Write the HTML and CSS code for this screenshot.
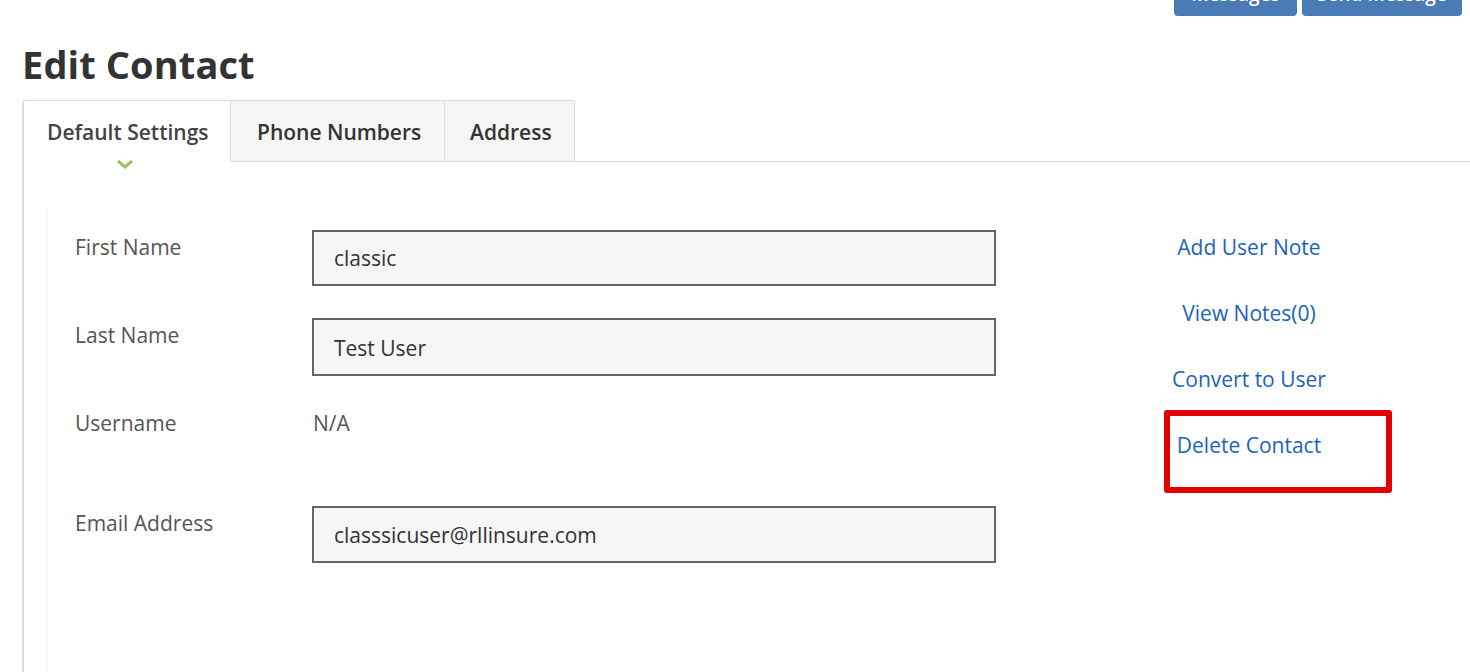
FILE: index.html
```html
<!DOCTYPE html>
<html>
<head>
<meta charset="utf-8">
<link rel="stylesheet" href="styles.css">
</head>
<body>
<div class="topbar">
  <button class="btn btn-msg">Messages</button>
  <button class="btn btn-send">Send Message</button>
</div>
<h1 class="title">Edit Contact</h1>
<div class="tabs">
  <div class="tab active">Default Settings<span class="chev"><svg width="18" height="10" viewBox="0 0 18 10"><path d="M2 2 L9 8 L16 2" fill="none" stroke="#9cc264" stroke-width="3"/></svg></span></div>
  <div class="tab">Phone Numbers</div>
  <div class="tab">Address</div>
  <div class="tabfill"></div>
</div>
<div class="panel">
  <div class="inner">
    <div class="form">
      <div class="row"><div class="label">First Name</div><div class="field">classic</div></div>
      <div class="row"><div class="label">Last Name</div><div class="field">Test User</div></div>
      <div class="row plain"><div class="label">Username</div><div class="value">N/A</div></div>
      <div class="row"><div class="label">Email Address</div><div class="field">classsicuser@rllinsure.com</div></div>
    </div>
    <div class="links">
      <a class="link">Add User Note</a>
      <a class="link">View Notes(0)</a>
      <a class="link">Convert to User</a>
      <a class="link highlight">Delete Contact</a>
    </div>
  </div>
</div>
</body>
</html>
```

FILE: styles.css
```css
html, body {
  margin: 0;
  padding: 0;
  background: #fff;
  font-family: "Open Sans", "Liberation Sans", sans-serif;
  color: #333;
  overflow: hidden;
  height: 672px;
}
.topbar {
  display: flex;
  justify-content: flex-end;
  gap: 5px;
  padding-right: 8px;
  height: 16px;
  overflow: hidden;
}
.btn {
  border: none;
  background: #4a7bb5;
  color: #fff;
  font-family: "Open Sans", sans-serif;
  font-size: 19px;
  font-weight: 600;
  height: 44px;
  margin-top: -28px;
  border-radius: 4px;
  line-height: 44px;
  padding: 0;
}
.btn-msg { width: 123px; }
.btn-send { width: 160px; }
.title {
  margin: 26px 0 0 22px;
  font-size: 38px;
  font-weight: 700;
  color: #333;
  line-height: 44px;
  letter-spacing: 0.1px;
}
.tabs {
  display: flex;
  margin: 14px 0 0 22px;
  height: 62px;
}
.tab {
  position: relative;
  box-sizing: border-box;
  height: 62px;
  padding: 0 25px 0 25px;
  background: #f5f5f5;
  border: 1px solid #ddd;
  border-left: none;
  border-radius: 0 3px 0 0;
  font-size: 21px;
  font-weight: 600;
  color: #333;
  line-height: 62px;
  white-space: nowrap;
}
.tab:nth-child(2) { width: 214px; padding: 0 0 0 26px; }
.tab:nth-child(3) { width: 130px; padding: 0 0 0 25px; }
.tab.active {
  width: 209px;
  background: #fff;
  color: #444;
  border-left: 2px solid #ddd;
  border-bottom: none;
  border-radius: 3px 0 0 0;
  padding-left: 23px;
}
.chev {
  position: absolute;
  left: 92px;
  top: 58px;
  line-height: 0;
}
.tabfill {
  flex: 1;
  border-bottom: 1px solid #ddd;
}
.panel {
  margin-left: 22px;
  border-left: 2px solid #ddd;
  height: 510px;
  box-sizing: border-box;
  padding: 46px 0 0 23px;
}
.inner {
  display: flex;
  border-left: 1px solid #f7f7f7;
  height: 464px;
  box-sizing: border-box;
  padding-top: 22px;
}
.form {
  width: 949px;
  padding-left: 27px;
  box-sizing: border-box;
}
.row {
  display: flex;
  height: 56px;
  margin-bottom: 32px;
}
.row.plain { height: 56px; margin-bottom: 44px; }
.label {
  width: 237px;
  flex: none;
  font-size: 21px;
  color: #555;
  line-height: 34px;
}
.field {
  width: 684px;
  height: 56px;
  box-sizing: border-box;
  border: 2px solid #666;
  background: #f6f6f6;
  font-size: 21px;
  color: #333;
  line-height: 52px;
  padding-left: 20px;
}
.row:nth-child(2) .field { height: 58px; line-height: 56px; }
.row:nth-child(4) .field { height: 57px; line-height: 55px; }
.value {
  font-size: 21px;
  color: #555;
  line-height: 34px;
  padding-left: 1px;
}
.links {
  display: flex;
  flex-direction: column;
  align-items: center;
  width: 200px;
  margin-left: 152px;
}
.link {
  font-size: 21px;
  color: #1c63b7;
  line-height: 34px;
  height: 66px;
  white-space: nowrap;
}
.link.highlight {
  position: relative;
}
.link.highlight::after {
  content: "";
  position: absolute;
  left: -13px;
  top: -18px;
  width: 228px;
  height: 83px;
  box-sizing: border-box;
  border: 6px solid #e20000;
  border-radius: 3px;
}
```
